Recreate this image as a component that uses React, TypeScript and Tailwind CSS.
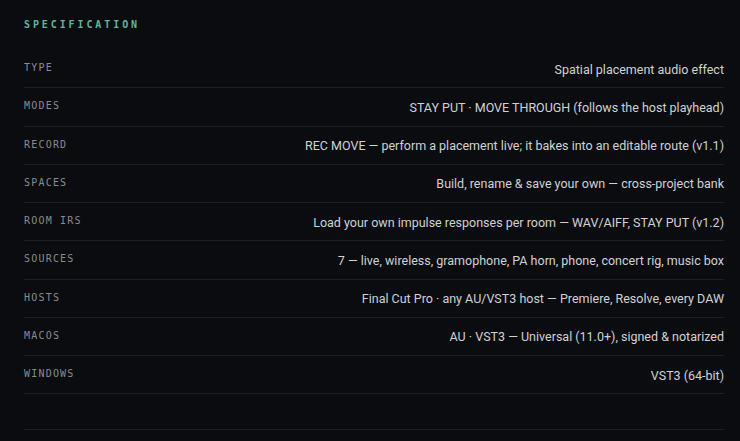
import React from "react";

const rows: [string, string][] = [
  ["TYPE", "Spatial placement audio effect"],
  ["MODES", "STAY PUT · MOVE THROUGH (follows the host playhead)"],
  ["RECORD", "REC MOVE — perform a placement live; it bakes into an editable route (v1.1)"],
  ["SPACES", "Build, rename & save your own — cross-project bank"],
  ["ROOM IRS", "Load your own impulse responses per room — WAV/AIFF, STAY PUT (v1.2)"],
  ["SOURCES", "7 — live, wireless, gramophone, PA horn, phone, concert rig, music box"],
  ["HOSTS", "Final Cut Pro · any AU/VST3 host — Premiere, Resolve, every DAW"],
  ["MACOS", "AU · VST3 — Universal (11.0+), signed & notarized"],
  ["WINDOWS", "VST3 (64-bit)"],
];

export default function App() {
  return (
    <div className="w-[740px] h-[441px] overflow-hidden bg-[#0b0c0f] px-[24px] pt-[17px]">
      <div className="mb-[18px] font-['DejaVu_Sans_Mono',monospace] text-[10px] leading-[15px] font-bold tracking-[0.29em] text-[#63b49c]">
        SPECIFICATION
      </div>
      <div className="w-[700px]">
        {rows.map(([k, v]) => (
          <div
            key={k}
            className="flex h-[38.25px] items-center justify-between border-b border-[#1e1f23]"
          >
            <span className="mb-[2px] font-['DejaVu_Sans_Mono',monospace] text-[10px] leading-[15px] tracking-[0.12em] text-[#8a8b8f]">
              {k}
            </span>
            <span className="mt-[2px] font-['Roboto',sans-serif] text-[12.5px] leading-[20px] text-[#d0d1d4]">
              {v}
            </span>
          </div>
        ))}
        <div className="h-[36px] border-b border-[#1e1f23]" />
      </div>
    </div>
  );
}
